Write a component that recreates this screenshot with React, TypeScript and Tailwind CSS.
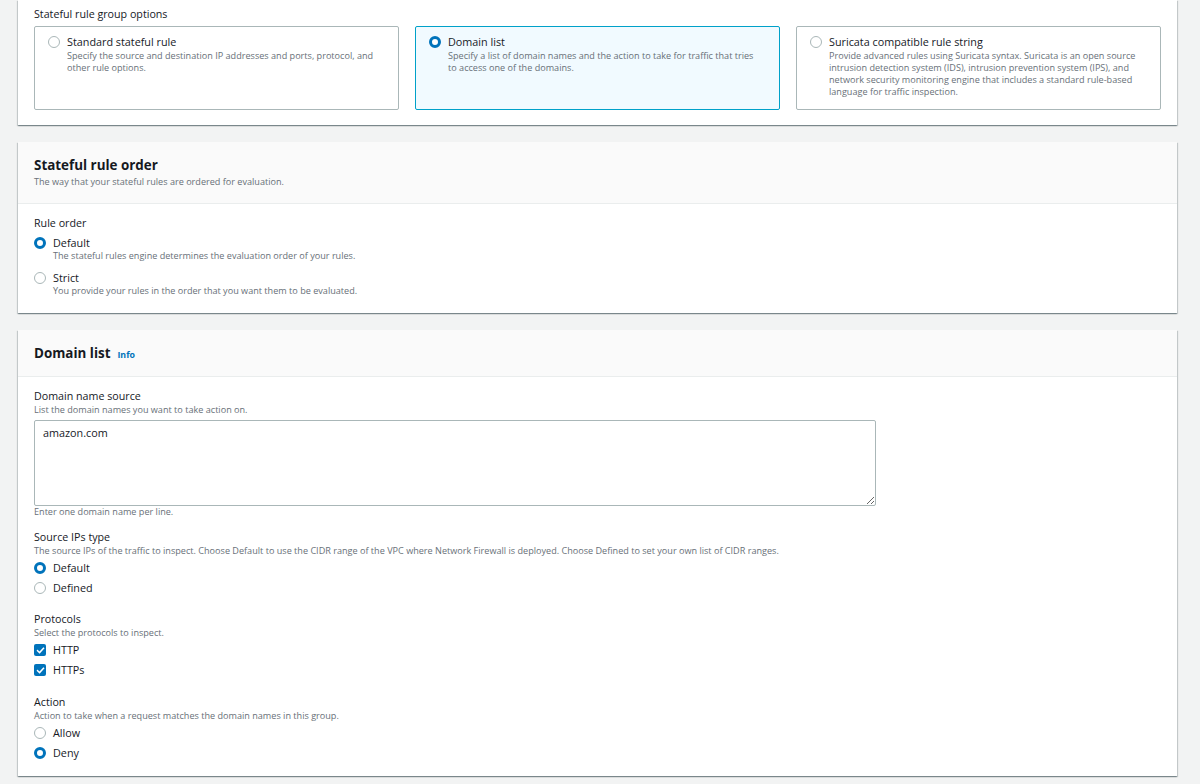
import React from "react";

const font = { fontFamily: '"Open Sans", "Noto Sans", Arial, sans-serif' };

function Radio({ checked }: { checked?: boolean }) {
  return checked ? (
    <span className="inline-block w-[12px] h-[12px] rounded-full border-[3.5px] border-[#0073bb] bg-white shrink-0" />
  ) : (
    <span className="inline-block w-[12px] h-[12px] rounded-full border border-[#aab7b8] bg-white shrink-0" />
  );
}

function Check() {
  return (
    <span className="inline-flex items-center justify-center w-[12px] h-[12px] rounded-[2px] bg-[#0073bb] shrink-0">
      <svg width="9" height="9" viewBox="0 0 10 10" fill="none">
        <path d="M1.8 5.2 L4 7.3 L8.3 2.6" stroke="white" strokeWidth="1.7" strokeLinecap="square" />
      </svg>
    </span>
  );
}

function Tile({ title, desc, selected }: { title: string; desc: string; selected?: boolean }) {
  return (
    <div
      className={
        "flex-1 h-[84px] rounded-[2px] border pl-[13px] pr-[16px] pt-[8px] flex gap-[7px] " +
        (selected ? "border-[#00a1c9] bg-[#f1faff]" : "border-[#aab7b8] bg-white")
      }
    >
      <div className="h-[14px] flex items-center">
        <Radio checked={selected} />
      </div>
      <div>
        <div className="text-[10.8px] leading-[14px] text-[#16191f]">{title}</div>
        <div className="pt-[1px] text-[9.1px] leading-[12px] text-[#687078]">{desc}</div>
      </div>
    </div>
  );
}

function Option({ label, desc, checked, box }: { label: string; desc?: string; checked?: boolean; box?: boolean }) {
  return (
    <div className="flex gap-[7px]">
      <div className="h-[14px] flex items-center">{box ? <Check /> : <Radio checked={checked} />}</div>
      <div>
        <div className="text-[10.8px] leading-[14px] text-[#16191f]">{label}</div>
        {desc && <div className="text-[9.1px] leading-[12px] text-[#687078]">{desc}</div>}
      </div>
    </div>
  );
}

const card =
  "bg-white shadow-[0_1px_1px_0_rgba(0,28,36,0.3),1px_1px_1px_0_rgba(0,28,36,0.15),-1px_1px_1px_0_rgba(0,28,36,0.15)]";

const label = "text-[10.7px] leading-[14px] text-[#16191f]";
const desc = "pt-[1px] text-[9.1px] leading-[12px] text-[#687078]";

export default function App() {
  return (
    <div style={font} className="w-[1200px] h-[784px] overflow-hidden bg-[#f2f3f3] pl-[18px] pr-[23px] flex flex-col gap-[17px]">
      {/* Card 1 */}
      <div className={card + " px-[16px] pt-[6px] pb-[15px]"}>
        <div className="text-[10.7px] leading-[16px] text-[#16191f]">Stateful rule group options</div>
        <div className="mt-[4px] flex gap-[16px]">
          <Tile
            title="Standard stateful rule"
            desc="Specify the source and destination IP addresses and ports, protocol, and other rule options."
          />
          <Tile
            selected
            title="Domain list"
            desc="Specify a list of domain names and the action to take for traffic that tries to access one of the domains."
          />
          <Tile
            title="Suricata compatible rule string"
            desc="Provide advanced rules using Suricata syntax. Suricata is an open source intrusion detection system (IDS), intrusion prevention system (IPS), and network security monitoring engine that includes a standard rule-based language for traffic inspection."
          />
        </div>
      </div>

      {/* Card 2 */}
      <div className={card}>
        <div className="bg-[#fafafa] border-b border-[#eaeded] px-[16px] pt-[13px] pb-[14px]">
          <div className="text-[13.4px] leading-[20px] font-bold text-[#16191f]">Stateful rule order</div>
          <div className="text-[9.1px] leading-[14px] text-[#687078]">
            The way that your stateful rules are ordered for evaluation.
          </div>
        </div>
        <div className="px-[16px] pt-[12px] pb-[16px]">
          <div className={label}>Rule order</div>
          <div className="mt-[6px] flex flex-col gap-[9px]">
            <Option checked label="Default" desc="The stateful rules engine determines the evaluation order of your rules." />
            <Option label="Strict" desc="You provide your rules in the order that you want them to be evaluated." />
          </div>
        </div>
      </div>

      {/* Card 3 */}
      <div className={card}>
        <div className="bg-[#fafafa] border-b border-[#eaeded] px-[16px] pt-[13px] pb-[13px] flex items-baseline gap-[7px]">
          <div className="text-[13.4px] leading-[20px] font-bold text-[#16191f]">Domain list</div>
          <div className="text-[8.8px] font-bold text-[#0073bb]">Info</div>
        </div>
        <div className="px-[16px] pt-[12px] pb-[16px]">
          <div className={label}>Domain name source</div>
          <div className={desc}>List the domain names you want to take action on.</div>
          <textarea
            readOnly
            defaultValue="amazon.com"
            style={font}
            className="mt-[4px] block w-[842px] h-[86px] border border-[#aab7b8] rounded-[2px] px-[8px] pt-[4px] text-[10.8px] leading-[16px] text-[#16191f] outline-none resize"
          />
          <div className="text-[9.1px] leading-[12px] text-[#687078]">Enter one domain name per line.</div>

          <div className={"mt-[12px] " + label}>Source IPs type</div>
          <div className={desc}>
            The source IPs of the traffic to inspect. Choose Default to use the CIDR range of the VPC where Network Firewall is deployed. Choose Defined to set your own list of CIDR ranges.
          </div>
          <div className="mt-[4px] flex flex-col gap-[6px]">
            <Option checked label="Default" />
            <Option label="Defined" />
          </div>

          <div className={"mt-[17px] " + label}>Protocols</div>
          <div className={desc}>Select the protocols to inspect.</div>
          <div className="mt-[4px] flex flex-col gap-[6px]">
            <Option box label="HTTP" />
            <Option box label="HTTPs" />
          </div>

          <div className={"mt-[18px] " + label}>Action</div>
          <div className={desc}>Action to take when a request matches the domain names in this group.</div>
          <div className="mt-[4px] flex flex-col gap-[6px]">
            <Option label="Allow" />
            <Option checked label="Deny" />
          </div>
        </div>
      </div>
    </div>
  );
}
